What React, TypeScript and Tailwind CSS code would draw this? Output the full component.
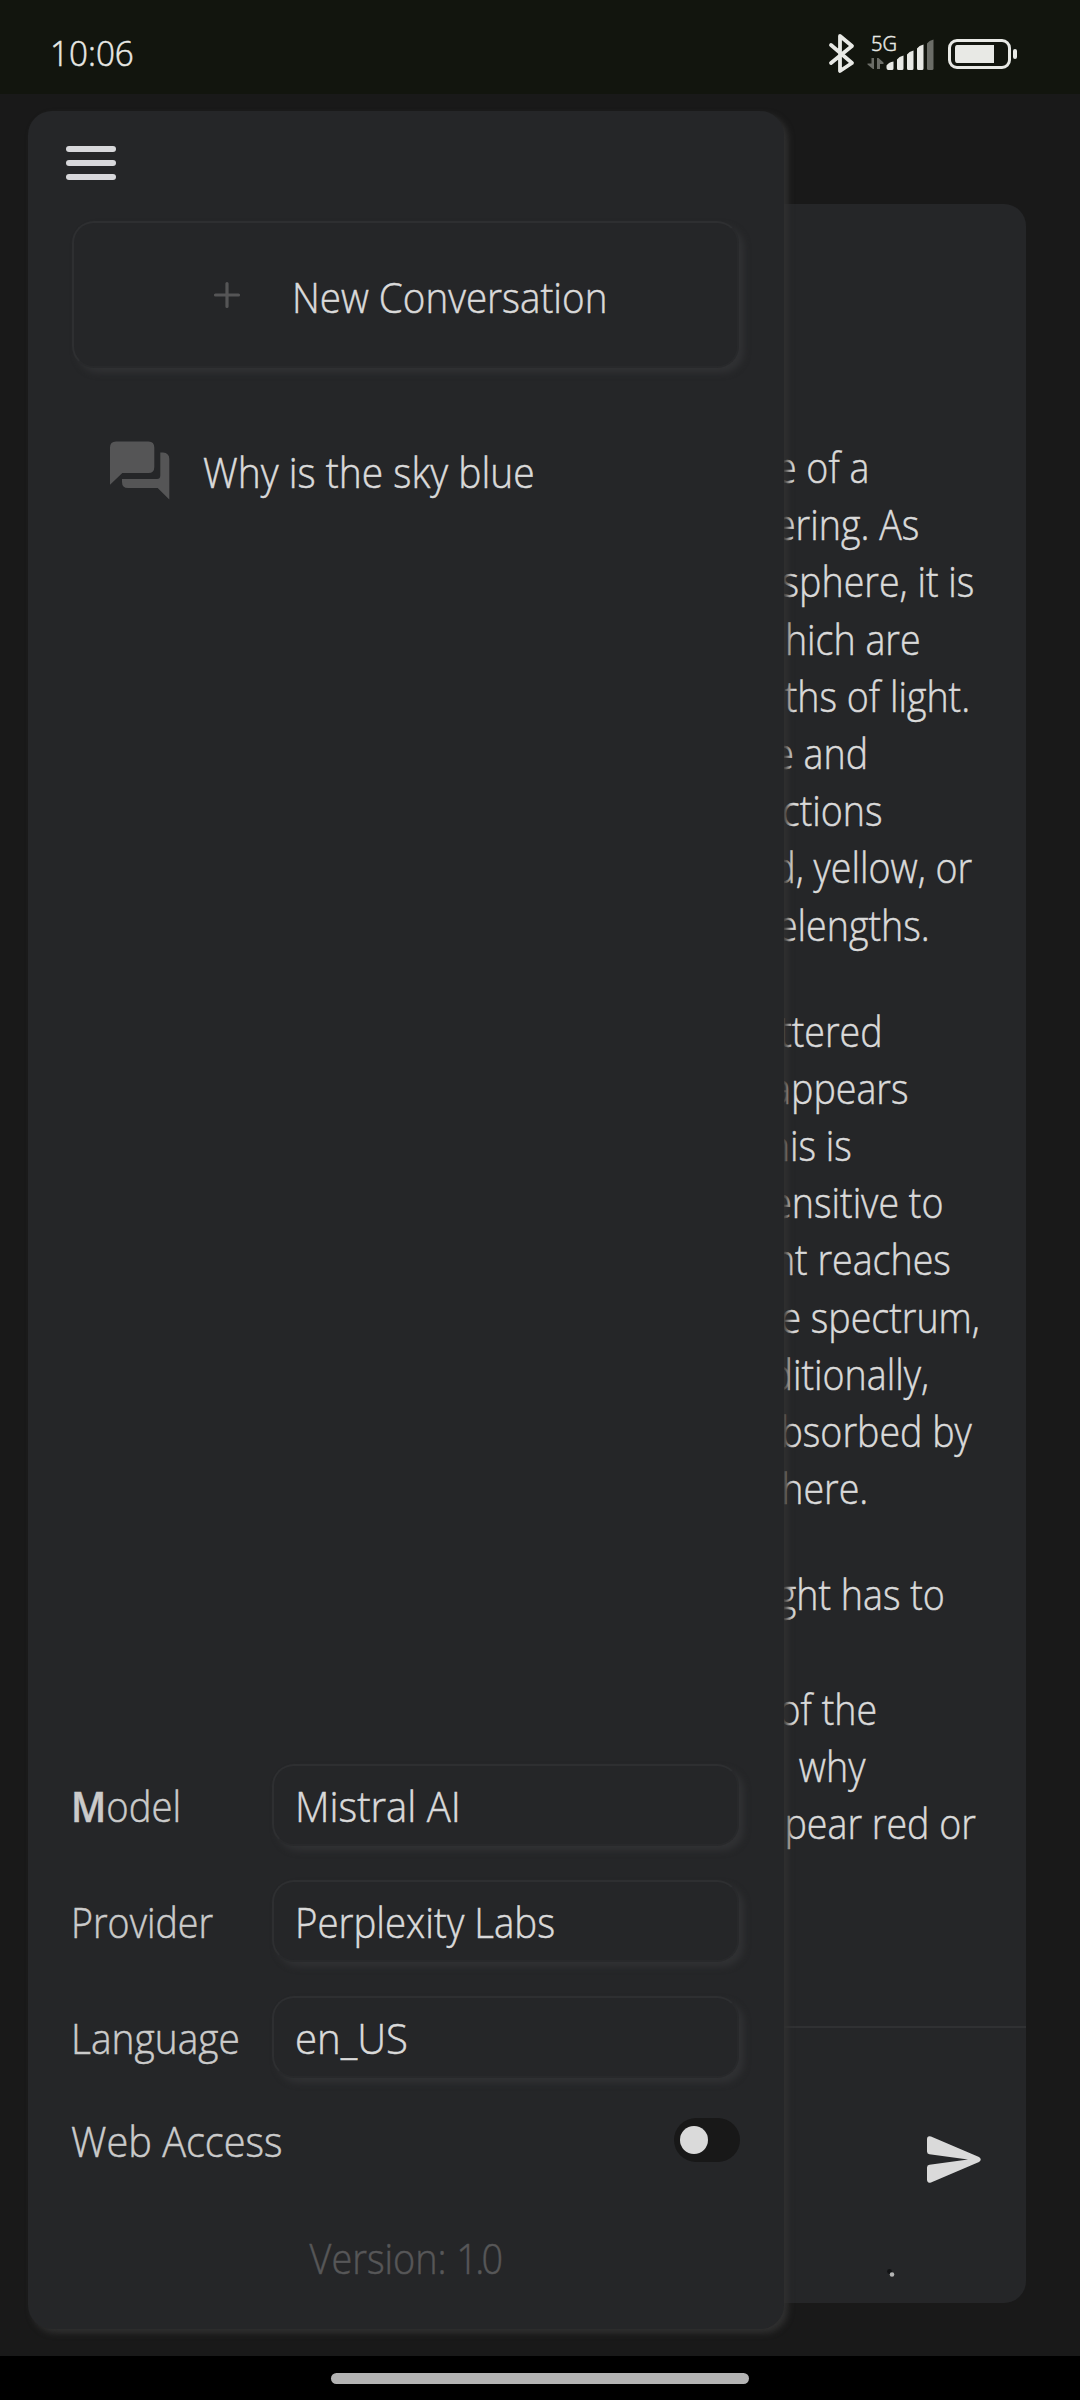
type Line = { text: string; className: string };

const paragraphs: Line[][] = [
  [
    { text: "e of a", className: "mr-[157px]" },
    { text: "ering. As", className: "mr-[107px]" },
    { text: "sphere, it is", className: "mr-[52px]" },
    { text: "hich are", className: "mr-[105px]" },
    { text: "ths of light.", className: "mr-[56px]" },
    { text: "e and", className: "mr-[158px]" },
    { text: "ctions", className: "mr-[144px]" },
    { text: "d, yellow, or", className: "mr-[54px]" },
    { text: "elengths.", className: "mr-[96px]" },
  ],
  [
    { text: "ttered", className: "mr-[143px]" },
    { text: "appears", className: "mr-[118px]" },
    { text: "his is", className: "mr-[174px]" },
    { text: "ensitive to", className: "mr-[83px]" },
    { text: "nt reaches", className: "mr-[75px]" },
    { text: "e spectrum,", className: "mr-[46px]" },
    { text: "ditionally,", className: "mr-[97px]" },
    { text: "bsorbed by", className: "mr-[54px]" },
    { text: "here.", className: "mr-[158px]" },
  ],
  [
    { text: "ght has to", className: "mr-[81px]" },
    { text: "", className: "" },
    { text: "of the", className: "mr-[149px]" },
    { text: "why", className: "mr-[161px]" },
    { text: "ppear red or", className: "mr-[50px]" },
  ],
];

function StatusBar() {
  return (
    <header className="flex h-[94px] items-start justify-between bg-[#12150e] pr-[62px] pl-[50px] text-[#e8e9e5]">
      <span className="mt-[29px] origin-left scale-x-[.95] text-[35px] leading-[48px]">10:06</span>
      <div className="flex items-start">
        <svg className="mt-[33px] h-[41px] w-[28px]" viewBox="0 0 28 41" fill="none" stroke="#e8e9e5" strokeWidth="3.8" strokeLinecap="round" strokeLinejoin="round">
          <path d="M4 12 25 30 13 38V3L25 13 4 30" />
        </svg>
        <div className="relative mt-[33px] ml-[12px] h-[41px] w-[68px]">
          <span className="absolute top-[-3px] left-[4px] text-[20px] leading-[27px]">5G</span>
          <svg className="h-[41px] w-[68px]" viewBox="0 0 68 41">
            <path fill="#6b6d67" d="M4.500 25H7V36H6L.5 31.500V30.500H4.500ZM10 36V25h1.500L16.500 29.500V31H13v5Z" />
            <path fill="#e8e9e5" d="M19.500 35V32.500Q22 29 26.500 28.500V35.500Q26.500 37 25 37H21.500Q19.500 37 19.500 35ZM30 35.500V26.500Q32 23.500 36.500 22.500V35.500Q36.500 37 35 37H31.500Q30 37 30 35.500ZM40 35.500V21.500Q42 18.500 46.500 17.500V35.500Q46.500 37 45 37H41.500Q40 37 40 35.500ZM50 35.500V15.500Q52 12.500 56.500 11.500V35.500Q56.500 37 55 37H51.500Q50 37 50 35.500Z" />
            <path fill="#6b6d67" d="M60 35.500V10.500Q62 7.500 66.500 6.500V35.500Q66.500 37 65 37H61.500Q60 37 60 35.500Z" />
          </svg>
        </div>
        <svg className="mt-[38px] ml-[12px] h-[32px] w-[71px]" viewBox="0 0 71 32">
          <rect x="2.500" y="2.500" width="60" height="27" rx="7.500" fill="none" stroke="#e8e9e5" strokeWidth="3" />
          <path fill="#e8e9e5" d="M10 7H47V25H10Q8 25 8 22V10Q8 7 10 7Z" />
          <rect x="66" y="11" width="4" height="10" rx="2" fill="#e8e9e5" />
        </svg>
      </div>
    </header>
  );
}

function ChatPanel() {
  return (
    <main className="flex h-[2099px] w-[998px] flex-col rounded-[22px] bg-[#252628]">
      <div className="flex h-[1822px] flex-col gap-[49px] overflow-hidden pt-[234px]">
        {paragraphs.map((lines, p) => (
          <div key={p} className="flex flex-col items-end">
            {lines.map((line, i) => (
              <div key={i} className={`h-[57.200px] origin-right scale-x-[.895] text-[42px] leading-[57.200px] whitespace-nowrap ${line.className}`}>
                {line.text}
              </div>
            ))}
          </div>
        ))}
      </div>
      <div className="flex flex-1 flex-col items-end border-t-2 border-[#303133]">
        <svg className="mt-[108px] mr-[45px] h-[47px] w-[54px]" viewBox="0 0 54 47">
          <path fill="#dadada" d="M0 3.500Q0 -.5 4 .6L52 21Q55.500 23.500 52 26L4 46.400Q0 47.500 0 43.500V31.500Q0 29 2.500 28.700L41 23.500 2.500 18.300Q0 18 0 15.500Z" />
        </svg>
        <svg className="mt-[85px] mr-[130px] h-[10px] w-[10px]" viewBox="0 0 10 10">
          <circle cx="3.500" cy="3.500" r="2.400" fill="#111214" />
          <circle cx="6" cy="6.500" r="2.300" fill="#b4b4b4" />
        </svg>
      </div>
    </main>
  );
}

function Field({ label, value, labelClass, valueClass }: { label: React.ReactNode; value: string; labelClass: string; valueClass: string }) {
  return (
    <div className="flex h-[82px] items-center">
      <div className={`w-[201px] origin-left text-[#cbcbcb] ${labelClass}`}>{label}</div>
      <div className="flex h-[82px] w-[467px] items-center rounded-[22px] border-2 border-[#2e2f31] border-r-[#28292b] border-b-[#28292b] bg-[#252628] pl-[21px] shadow-[5px_5px_6px_#303133]">
        <span className={`origin-left whitespace-nowrap ${valueClass}`}>{value}</span>
      </div>
    </div>
  );
}

function Sidebar() {
  return (
    <aside className="absolute top-[17px] left-[28px] flex h-[2218px] w-[756px] flex-col rounded-[24px] bg-[#252628] pr-[45px] pl-[43px] text-[42px] leading-[57px] shadow-[4px_4px_6px_#303030]">
      <button className="mt-[35px] -ml-[5px] flex w-[50px] flex-col gap-[8px]">
        <span className="h-[6px] w-full rounded-full bg-[#d8d8db]" />
        <span className="h-[6px] w-full rounded-full bg-[#d8d8db]" />
        <span className="h-[6px] w-full rounded-full bg-[#d8d8db]" />
      </button>
      <button className="mt-[41px] ml-[1px] flex h-[147px] shrink-0 items-center rounded-[22px] border-2 border-[#2e2f31] border-r-[#28292b] border-b-[#28292b] bg-[#252628] pl-[138.500px] shadow-[5px_5px_6px_#303133]">
        <svg className="h-[28px] w-[28px]" viewBox="0 0 28 28" stroke="#555556" strokeWidth="3.200" strokeLinecap="round">
          <path d="M14 2.500V25.500M2.500 14H25.500" />
        </svg>
        <span className="mt-[3px] ml-[51.500px] origin-left scale-x-[.918] whitespace-nowrap">New Conversation</span>
      </button>
      <div className="mt-[73px] flex items-start pl-[39px]">
        <svg className="h-[60px] w-[60px]" viewBox="0 0 60 60" fill="#555556">
          <path d="M6 .5H38.500Q44.300 .5 44.300 6.500V26Q44.300 32 38.500 32H12.300L0 43.700V6.500Q0 .5 6 .5Z" />
          <path d="M50.300 11.500H53Q59.300 12 59.300 18V58.500L47.700 47H18Q12 47 12 41V38H47Q50.300 38 50.300 34.500Z" />
        </svg>
        <span className="mt-[2px] ml-[32.500px] origin-left scale-x-[.927] whitespace-nowrap">Why is the sky blue</span>
      </div>
      <div className="mt-auto flex flex-col gap-[34px]">
        <Field label={<><span className="font-semibold">M</span>odel</>} value="Mistral AI" labelClass="scale-x-[.91]" valueClass="scale-x-[.952]" />
        <Field label="Provider" value="Perplexity Labs" labelClass="scale-x-[.895]" valueClass="scale-x-[.914]" />
        <Field label="Language" value="en_US" labelClass="scale-x-[.926]" valueClass="scale-x-[.955]" />
      </div>
      <div className="mt-[34px] flex h-[58px] items-start justify-between">
        <span className="origin-left scale-x-[.945] whitespace-nowrap text-[#cbcbcb]">Web Access</span>
        <span className="mt-[6px] mr-[-1px] flex h-[44px] w-[66px] items-center rounded-full bg-[#181818] pl-[6px]">
          <span className="size-[28px] rounded-full bg-[#dadada]" />
        </span>
      </div>
      <div className="mt-[59px] mb-[43px] flex justify-center">
        <span className="scale-x-[.9] whitespace-nowrap text-[#575758]">
          Version: <span className="tracking-[-3px]">1.0</span>
        </span>
      </div>
    </aside>
  );
}

export default function App() {
  return (
    <div className="flex h-[2400px] w-[1080px] flex-col overflow-hidden bg-black font-['Open_Sans',sans-serif] font-light text-[#dadada] [-webkit-text-stroke:0.5px]">
      <StatusBar />
      <div className="relative h-[2262px] shrink-0 bg-[#191919] pt-[110px] pl-[28px]">
        <ChatPanel />
        <Sidebar />
      </div>
      <div className="flex justify-center pt-[17px]">
        <div className="h-[11px] w-[418px] rounded-full bg-[#b3b3b3]" />
      </div>
    </div>
  );
}
